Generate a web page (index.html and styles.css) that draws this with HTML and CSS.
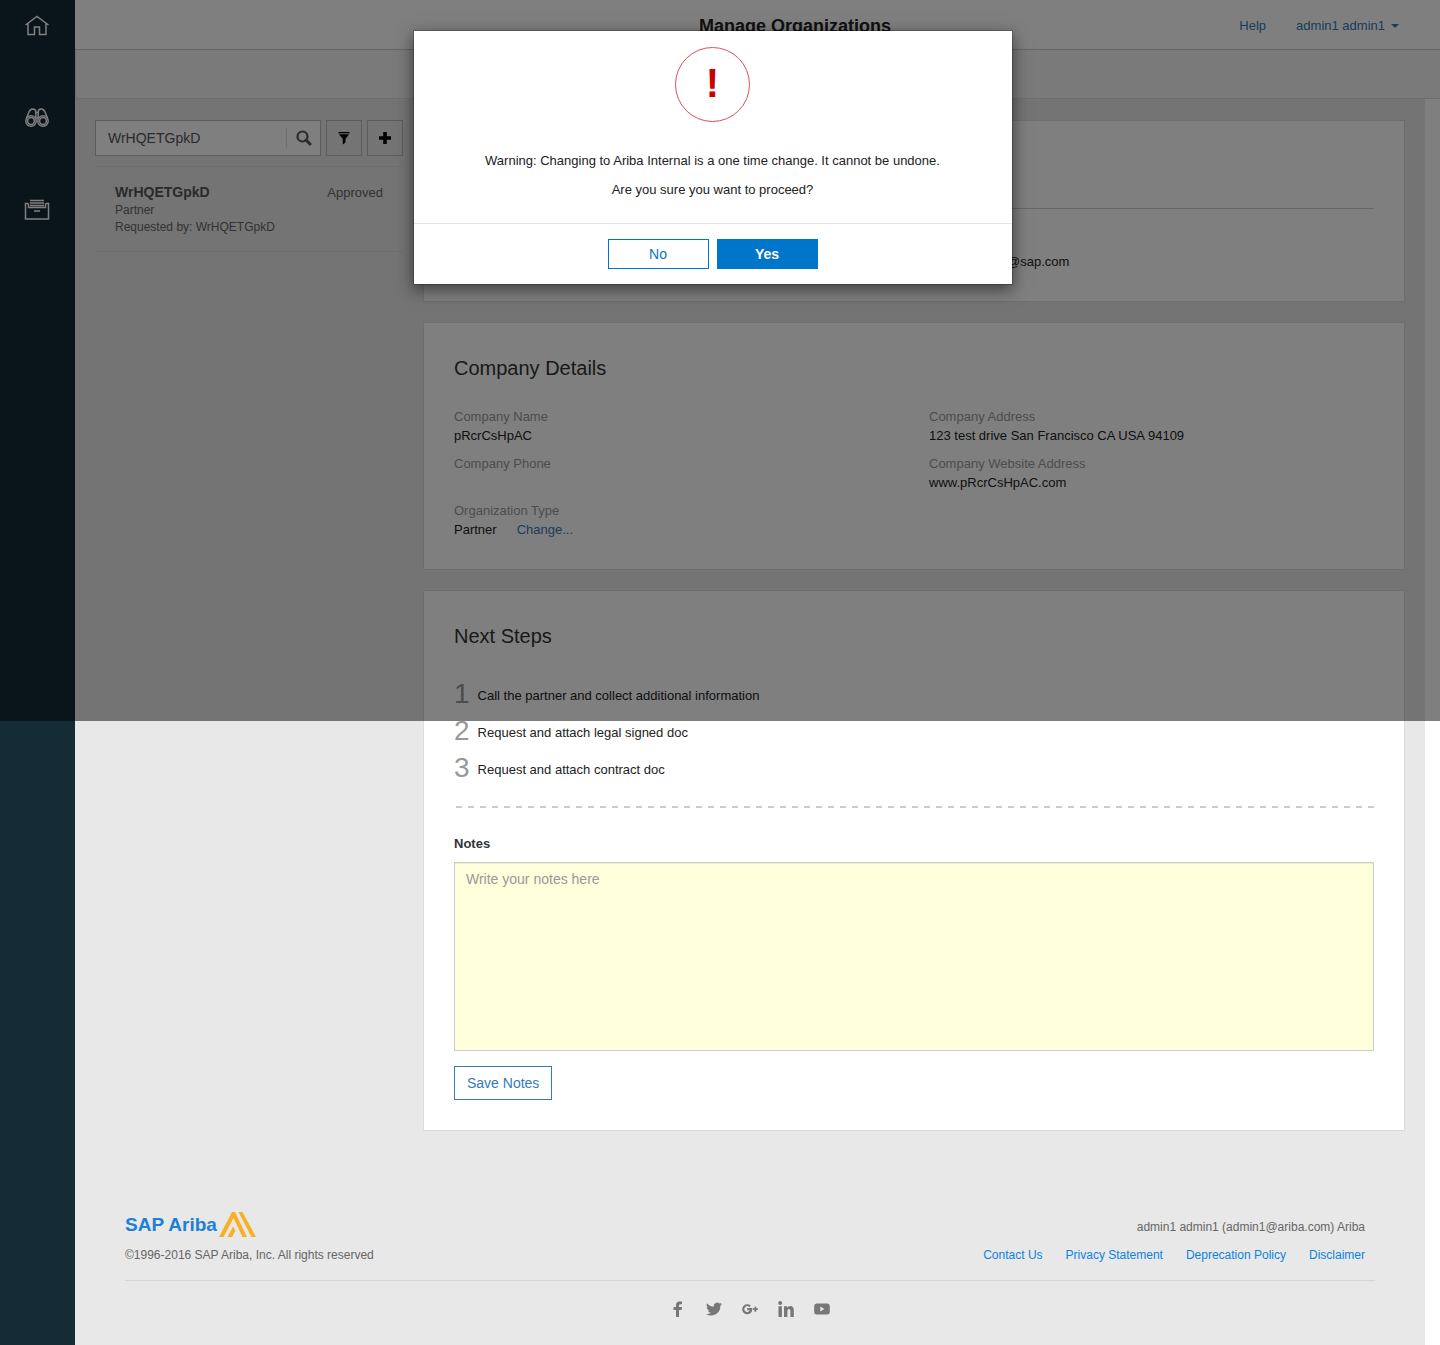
FILE: index.html
```html
<!DOCTYPE html>
<html lang="en">
<head>
<meta charset="utf-8">
<title>Manage Organizations</title>
<link rel="stylesheet" href="styles.css">
</head>
<body>
<div class="app">
  <nav class="sidebar" aria-label="Main">
    <a href="#" aria-label="Home"><svg width="26" height="24" viewBox="0 0 26 24"><path d="M1.500 12 13 3.500 24.500 12M4 10.500V21.500H10.500V14H15.500V21.500H22V10.500" /></svg></a>
    <a href="#" aria-label="Search"><svg width="26" height="24" viewBox="0 -1 26 24"><circle cx="7" cy="15" r="5.200"/><circle cx="7" cy="15" r="3.400"/><circle cx="19" cy="15" r="5.200"/><circle cx="19" cy="15" r="3.400"/><path d="M2.500 12 5 6Q6.200 3 8.700 3 11.800 3 11.800 6V12.500M23.500 12 21 6Q19.800 3 17.300 3 14.200 3 14.200 6V12.500M12 6.500H14M12 12H14"/></svg></a>
    <a href="#" aria-label="Archive"><svg width="26" height="24" viewBox="0 -1 26 24"><path d="M6 2.500H20M6 5H20M4.500 5.500H1.500V21H24.500V5.500H21.500M4.500 5.500V9.500H21.500V5.500M6 7.500H20M10 13H16"/></svg></a>
  </nav>

  <div class="page">
    <header class="topbar">
      <h1>Manage Organizations</h1>
      <div class="topbar-links">
        <a href="#">Help</a>
        <a href="#" class="user">admin1 admin1 <span class="caret"></span></a>
      </div>
    </header>
    <div class="subbar"></div>

    <div class="content">
      <main class="columns">
        <aside class="list">
          <form class="search">
            <div class="search-box">
              <input type="text" value="WrHQETGpkD" aria-label="Search organizations">
              <button type="button" class="go" aria-label="Search"><svg width="16" height="16" viewBox="0 0 16 16"><circle cx="6.500" cy="6.500" r="5" fill="none" stroke="#555" stroke-width="2.200"/><path d="M10 10 14 14" stroke="#555" stroke-width="3" stroke-linecap="round"/></svg></button>
            </div>
            <button type="button" class="tool" aria-label="Filter"><svg width="12" height="14" viewBox="0 0 12 14"><path d="M.5 1H11.500V2.200H.5ZM1 3.200H11L7.500 8V11.500L4.800 13.500V8Z"/></svg></button>
            <button type="button" class="tool" aria-label="Add"><svg width="14" height="14" viewBox="0 0 14 14"><path d="M5.200 1H8.800V5.200H13V8.800H8.800V13H5.200V8.800H1V5.200H5.200Z"/></svg></button>
          </form>
          <article class="org">
            <div>
              <h2>WrHQETGpkD</h2>
              <p>Partner</p>
              <p>Requested by: WrHQETGpkD</p>
            </div>
            <span class="status">Approved</span>
          </article>
        </aside>

        <div class="details">
          <section class="card">
            <div class="card-head"></div>
            <dl class="fields">
              <div class="second"><dt></dt><dd>pRcrCsHpAC@sap.com</dd></div>
            </dl>
          </section>

          <section class="card">
            <h2>Company Details</h2>
            <dl class="fields">
              <div><dt>Company Name</dt><dd>pRcrCsHpAC</dd></div>
              <div><dt>Company Address</dt><dd>123 test drive San Francisco CA USA 94109</dd></div>
              <div><dt>Company Phone</dt><dd></dd></div>
              <div><dt>Company Website Address</dt><dd>www.pRcrCsHpAC.com</dd></div>
              <div><dt>Organization Type</dt><dd class="type">Partner <a href="#">Change...</a></dd></div>
            </dl>
          </section>

          <section class="card">
            <h2>Next Steps</h2>
            <ol class="steps">
              <li><span>1</span>Call the partner and collect additional information</li>
              <li><span>2</span>Request and attach legal signed doc</li>
              <li><span>3</span>Request and attach contract doc</li>
            </ol>
            <div class="dashes"></div>
            <form class="notes">
              <label for="notes">Notes</label>
              <textarea id="notes" placeholder="Write your notes here"></textarea>
              <button type="button">Save Notes</button>
            </form>
          </section>
        </div>
      </main>

      <footer class="footer">
        <div class="footer-main">
          <div>
            <div class="logo">SAP Ariba <svg width="37" height="25" viewBox="0 0 37 25"><path d="M0 25 13 0H16L28 25H23.500L14.500 6 4.500 25ZM19.500 0H23.500L37 25H32.500ZM8.500 25 14 14.500 16.500 18.500 13 25Z"/></svg></div>
            <p>©1996-2016 SAP Ariba, Inc. All rights reserved</p>
          </div>
          <div class="footer-right">
            <p>admin1 admin1 (admin1@ariba.com) Ariba</p>
            <div class="footer-links">
              <a href="#">Contact Us</a>
              <a href="#">Privacy Statement</a>
              <a href="#">Deprecation Policy</a>
              <a href="#">Disclaimer</a>
            </div>
          </div>
        </div>
        <div class="social">
          <a href="#" aria-label="Facebook"><svg width="16" height="16" viewBox="0 0 16 16"><path d="M6 16V9H3.500V6H6V4Q6 .5 9.500.5H12V3.200H10.300Q9 3.200 9 4.500V6H12L11.600 9H9V16Z"/></svg></a>
          <a href="#" aria-label="Twitter"><svg width="16" height="16" viewBox="0 0 24 24"><path d="M24 4.600a10 10 0 0 1-2.800.8 5 5 0 0 0 2.200-2.700 10 10 0 0 1-3.100 1.200 4.900 4.900 0 0 0-8.400 4.500A14 14 0 0 1 1.700 3.200a4.900 4.900 0 0 0 1.500 6.500 5 5 0 0 1-2.200-.6 4.900 4.900 0 0 0 3.900 4.900 5 5 0 0 1-2.200.1 4.900 4.900 0 0 0 4.600 3.400A9.900 9.900 0 0 1 0 19.500 14 14 0 0 0 21.500 7.100 10 10 0 0 0 24 4.600Z"/></svg></a>
          <a href="#" aria-label="Google Plus"><svg width="16" height="16" viewBox="0 0 16 16"><path d="M8.700 4.500 7.300 6.200A2.800 2.800 0 1 0 7.800 9.300H5.200V7.100H10.300Q10.500 13.200 5.300 13.300A5.200 5.200 0 0 1 .1 8 5.200 5.200 0 0 1 8.700 4.500ZM12.500 5.800H14.200V7.300H15.900V9H14.200V10.700H12.500V9H10.900V7.300H12.500Z"/></svg></a>
          <a href="#" aria-label="LinkedIn"><svg width="16" height="16" viewBox="0 0 16 16"><circle cx="2.200" cy="2" r="2"/><path d="M.5 5.300H3.900V16H.5ZM6 5.300H9.200V6.800Q10.200 5 12.400 5 15.800 5 15.800 9.500V16H12.400V10.200Q12.400 8 11 8 9.400 8 9.400 10.300V16H6Z"/></svg></a>
          <a href="#" aria-label="YouTube"><svg width="16" height="16" viewBox="0 0 16 16"><path fill-rule="evenodd" d="M2.500 2.500H13.500Q15.800 2.500 15.800 5V11Q15.800 13.500 13.500 13.500H2.500Q.2 13.500.2 11V5Q.2 2.500 2.500 2.500ZM6.300 5.600V10.400L10.400 8Z"/></svg></a>
        </div>
      </footer>
    </div>
  </div>
</div>

<div class="overlay">
  <div class="modal" role="dialog" aria-modal="true">
    <div class="modal-body">
      <div class="alert">!</div>
      <p>Warning: Changing to Ariba Internal is a one time change. It cannot be undone.</p>
      <p>Are you sure you want to proceed?</p>
    </div>
    <div class="modal-actions">
      <button type="button">No</button>
      <button type="button" class="primary">Yes</button>
    </div>
  </div>
</div>
</body>
</html>
```
FILE: styles.css
```css
* { box-sizing: border-box; }
body {
  margin: 0;
  position: relative;
  background: #fff;
  color: #222;
  font: 13px/19px "Liberation Sans", Arial, sans-serif;
}
h1, h2, p, dl, dd, ol { margin: 0; padding: 0; font-weight: normal; }
a { color: #337ab7; text-decoration: none; }
button, input, textarea { font: inherit; }
svg { display: block; }

.app { display: flex; min-height: 100vh; }
.sidebar {
  flex: 0 0 75px;
  display: flex;
  flex-direction: column;
  align-items: center;
  gap: 68px;
  padding: 13px 1px 0 0;
  background: #152b36;
}
.sidebar svg { fill: none; stroke: #fff; stroke-width: 1.5; }
.page { flex: 1; display: flex; flex-direction: column; min-width: 0; }

.topbar {
  display: grid;
  grid-template-columns: 1fr auto 1fr;
  align-items: center;
  height: 50px;
  padding: 2px 0 0 75px;
  border-bottom: 1px solid #ccc;
}
.topbar h1 {
  grid-column: 2;
  font-size: 18px;
  line-height: 26px;
  font-weight: bold;
}
.topbar-links {
  display: flex;
  justify-content: flex-end;
  gap: 30px;
  padding-right: 41px;
}
.user { display: flex; align-items: center; gap: 6px; }
.caret { border: 4px solid transparent; border-top-color: #337ab7; border-bottom: 0; }
.subbar { height: 49px; background: #f4f4f4; border: solid #ddd; border-width: 0 0 1px 1px; }

.content {
  flex: 1;
  margin-right: 15px;
  background: #e8e8e8;
}
.columns {
  display: grid;
  grid-template-columns: 308px 1fr;
  gap: 20px;
  padding: 21px 20px 0;
}

.search { display: flex; gap: 5px; }
.search-box {
  flex: 1;
  display: flex;
  align-items: center;
  min-width: 0;
  height: 36px;
  background: #fff;
  border: 1px solid #b8b8b8;
}
.search-box input {
  flex: 1;
  min-width: 0;
  padding: 0 12px;
  border: 0;
  background: none;
  color: #555;
  font-size: 14px;
}
.go {
  height: 20px;
  padding: 0 8px 0 9px;
  border: 0;
  border-left: 1px solid #ddd;
  background: none;
}
.tool {
  flex: none;
  display: flex;
  align-items: center;
  justify-content: center;
  width: 36px;
  padding: 0;
  background: #e8e8e8;
  border: 1px solid #b8b8b8;
}
.org {
  display: flex;
  justify-content: space-between;
  margin-top: 10px;
  padding: 16px 20px 15px;
  border: solid #ddd;
  border-width: 1px 0;
  color: #666;
}
.org h2 { font-size: 14px; line-height: 19px; font-weight: bold; color: #555; }
.org p { font-size: 12px; line-height: 17px; }

.details { display: flex; flex-direction: column; gap: 20px; min-width: 0; }
.card { padding: 30px; background: #fff; border: 1px solid #dcdcdc; }
.card h2 { margin-bottom: 24px; font-size: 20px; line-height: 30px; color: #333; }
.card-head { height: 58px; margin-bottom: 24px; border-bottom: 1px solid #ccc; }
.fields { display: grid; grid-template-columns: 1fr 1fr; row-gap: 9px; column-gap: 30px; }
.fields dt { min-height: 19px; color: #999; }
.fields dd { min-height: 19px; }
.fields .second { grid-column: 2; }
.type { display: flex; gap: 20px; }
.steps { padding-top: 2px; list-style: none; }
.steps li { display: flex; align-items: center; gap: 8px; height: 37px; }
.steps span { padding-bottom: 4px; font-size: 28px; color: #999; }
.dashes {
  height: 2px;
  margin: 18px 0 26px;
  background: repeating-linear-gradient(90deg, transparent 0 2px, #ccc 2px 8px, transparent 8px 12px);
}
.notes { display: flex; flex-direction: column; align-items: flex-start; }
.notes label { font-weight: bold; color: #333; }
.notes textarea {
  width: 100%;
  height: 189px;
  margin: 9px 0 15px;
  padding: 7px 11px;
  border: 1px solid #ccc;
  border-radius: 0;
  background: #ffffdb;
  box-shadow: inset 0 1px 1px rgba(0, 0, 0, .08);
  font-size: 14px;
  resize: none;
}
.notes textarea::placeholder { color: #999; }
.notes button {
  height: 34px;
  padding: 0 12px;
  border: 1px solid #337ab7;
  background: #fff;
  color: #337ab7;
  font-size: 14px;
}

.footer { padding: 80px 50px 29px; font-size: 12px; color: #666; }
.footer-main {
  display: flex;
  justify-content: space-between;
  align-items: flex-end;
  padding: 0 10px 15px 0;
  border-bottom: 1px solid #d5d5d5;
}
.logo {
  display: flex;
  align-items: center;
  gap: 2px;
  height: 27px;
  margin-bottom: 8px;
  color: #1a80d8;
  font-size: 19px;
  font-weight: bold;
}
.logo svg { fill: #f8b028; }
.footer-right { text-align: right; }
.footer-links { display: flex; justify-content: flex-end; gap: 23px; margin-top: 9px; }
.footer-links a { color: #0a84e0; }
.social { display: flex; justify-content: center; gap: 20px; padding-top: 20px; }
.social svg { fill: #777; }

/* The backdrop covers the first screen; the dialog floats above it. */
.overlay {
  position: absolute;
  top: 0;
  left: 0;
  right: 0;
  height: 721px;
  padding: 30px 15px 0 0;
  background: rgba(0, 0, 0, .5);
}
.modal {
  max-width: 600px;
  margin: 0 auto;
  border: 1px solid rgba(0, 0, 0, .2);
  background: #fff;
  background-clip: padding-box;
  box-shadow: 0 5px 15px rgba(0, 0, 0, .5);
  text-align: center;
}
.modal-body { padding: 16px 15px 24px; }
.alert {
  width: 75px;
  height: 75px;
  margin: 0 auto 29px;
  border: 1px solid #dc5050;
  border-radius: 50%;
  color: #c00;
  font-size: 40px;
  line-height: 70px;
  font-weight: bold;
}
.modal-body p + p { margin-top: 10px; }
.modal-actions {
  display: flex;
  justify-content: center;
  gap: 8px;
  padding: 15px;
  border-top: 1px solid #e5e5e5;
}
.modal-actions button {
  width: 101px;
  height: 30px;
  border: 1px solid #0076cb;
  background: #fff;
  color: #0076cb;
  font-size: 14px;
}
.modal-actions .primary { background: #0076cb; color: #fff; font-weight: bold; }
```
